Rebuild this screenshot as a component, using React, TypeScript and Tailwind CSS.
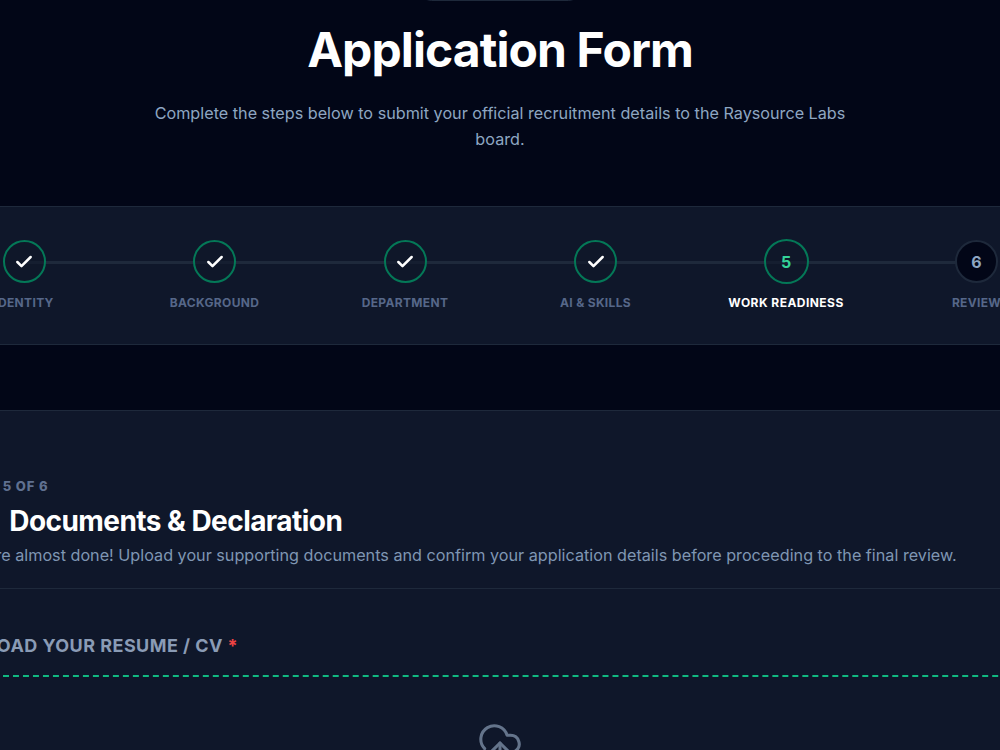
import { Check } from "lucide-react";

const done = ["IDENTITY", "BACKGROUND", "DEPARTMENT", "AI & SKILLS"];

function Done({ label }: { label: string }) {
  return (
    <div className="relative z-10 flex w-[190.5px] flex-col items-center">
      <div className="flex h-[43px] w-[43px] items-center justify-center rounded-full border-2 border-[#047857] bg-[#0f172a]/60">
        <Check className="h-5 w-5 text-white" strokeWidth={3} />
      </div>
      <span className="mt-3 whitespace-nowrap text-xs font-bold leading-[16px] tracking-[0.33px] text-[#566789]">{label}</span>
    </div>
  );
}

export default function App() {
  return (
    <div className="h-[750px] w-[1000px] overflow-hidden bg-[#020617] font-['Inter',sans-serif]">
      <div className="mx-auto -mt-[30px] h-[31px] w-[168px] rounded-full border border-[#1e293b] bg-[#0f172a]" />
      <h1 className="mt-[19px] text-center text-5xl font-bold leading-[60px] tracking-[-0.9px] text-white">Application Form</h1>
      <p className="mx-auto mt-[20px] w-[700px] text-center text-[16.2px] leading-[26px] text-[#8ea6c2]">
        Complete the steps below to submit your official recruitment details to the Raysource Labs board.
      </p>
      <div className="relative -ml-[71.25px] mt-[54px] h-[139px] w-[1143px] border-y border-[#1e293b] bg-[#0f172a] pt-[33px]">
        <div className="absolute left-[95px] top-[54px] h-[3px] w-[952px] bg-[#1e293b]" />
        <div className="flex">
          {done.map((d) => (
            <Done key={d} label={d} />
          ))}
          <div className="relative z-10 flex w-[190.5px] flex-col items-center">
            <div className="-my-px flex h-[45px] w-[45px] items-center justify-center rounded-full border-2 border-[#047857] bg-[#0f172a]/60 text-base font-bold text-[#34d399]">5</div>
            <span className="mt-3 whitespace-nowrap text-xs font-bold leading-[16px] tracking-[0.45px] text-white">WORK READINESS</span>
          </div>
          <div className="relative z-10 flex w-[190.5px] flex-col items-center">
            <div className="flex h-[43px] w-[43px] items-center justify-center rounded-full border-2 border-[#1e293b] bg-[#020617] text-base font-bold text-[#8ea6c2]">6</div>
            <span className="mt-3 whitespace-nowrap text-xs font-bold leading-[16px] tracking-[0.33px] text-[#566789]">REVIEW</span>
          </div>
        </div>
      </div>
      <div className="-ml-[70.5px] mt-[65px] h-[400px] w-[1141px] border-t border-[#1e293b] bg-[#0f172a]">
        <div className="px-[32px] pt-[67px]">
          <p className="text-[13px] font-extrabold leading-[16px] tracking-[0.9px] text-[#5f7090]">STEP 5 OF 6</p>
          <h2 className="mt-[9px] whitespace-nowrap text-[28px] font-bold leading-[36px] tracking-[-0.55px] text-white">
            <span className="mr-[17px]">5. </span>Documents &amp; Declaration
          </h2>
          <p className="mt-[4px] whitespace-nowrap text-[16.2px] leading-[24px] text-[#7f96b3]">
            You're almost done! Upload your supporting documents and confirm your application details before proceeding to the final review.
          </p>
        </div>
        <div className="mt-[21px] border-t border-[#1e293b] px-[31.5px] pt-[45px]">
          <p className="text-lg font-bold leading-[24px] tracking-[0.45px] text-[#8a9bb5]">
            UPLOAD YOUR RESUME / CV <span className="text-[#ef4444]">*</span>
          </p>
          <div className="mt-[17px] flex h-[200px] justify-center rounded-xl border-2 border-dashed border-[#10b981] pt-[43px]">
            <svg className="h-[46px] w-[46px] text-[#64748b]" viewBox="0 0 24 24" fill="none" stroke="currentColor" strokeWidth={1.6} strokeLinecap="round" strokeLinejoin="round">
              <path d="M12 12v9" />
              <path d="M4 14.899A7 7 0 1 1 15.71 8h1.79a4.5 4.5 0 0 1 2.5 8.242" />
              <path d="m16 16-4-4-4 4" />
            </svg>
          </div>
        </div>
      </div>
    </div>
  );
}
